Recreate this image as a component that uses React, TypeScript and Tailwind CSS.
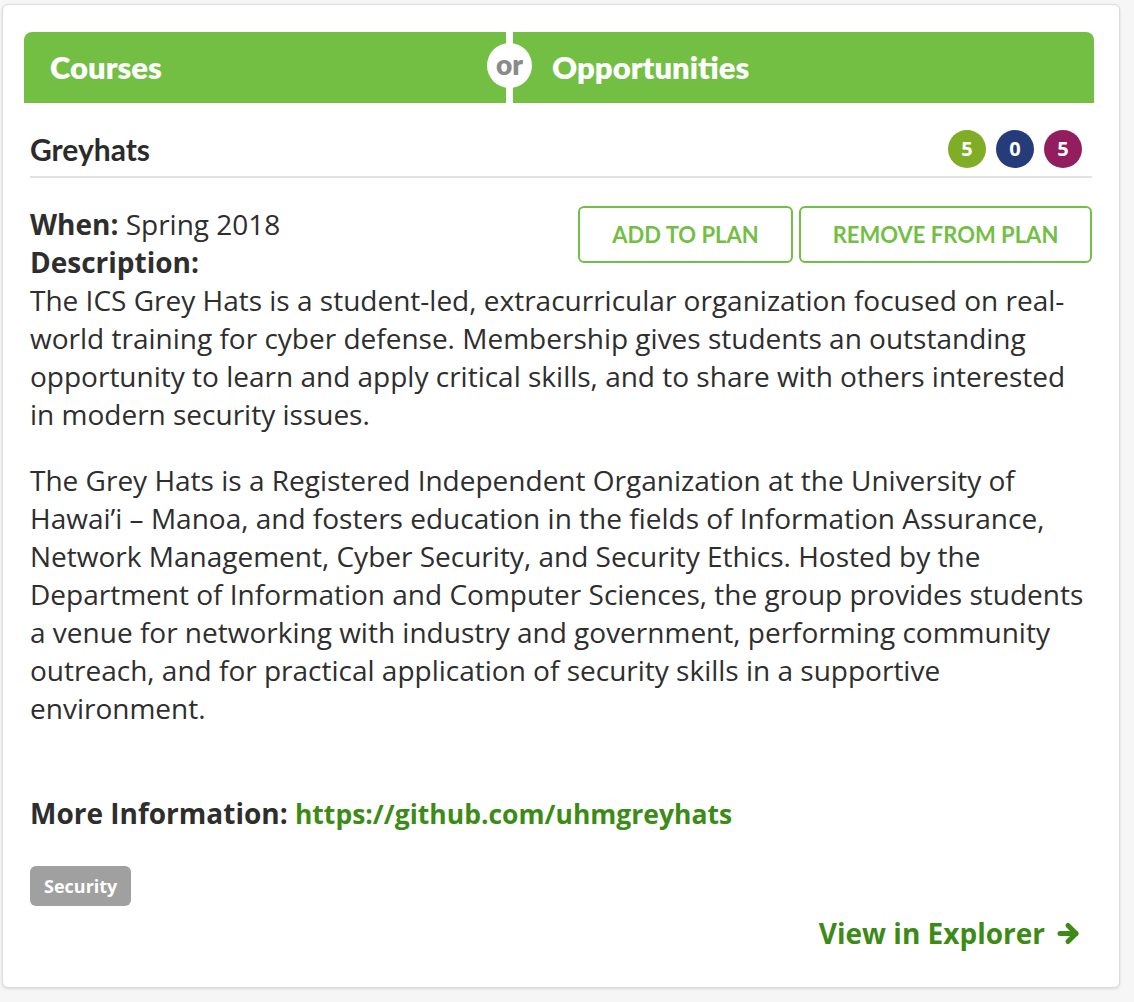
const body = { fontFamily: '"Open Sans", "Liberation Sans", sans-serif' };
const head = { fontFamily: 'Lato, "Open Sans", sans-serif' };

function CountBadge({ value, color }: { value: number; color: string }) {
  return (
    <span
      className={`flex h-[38px] w-[38px] items-center justify-center rounded-full text-[20px] font-bold text-white ${color}`}
      style={body}
    >
      {value}
    </span>
  );
}

export default function App() {
  return (
    <div className="min-h-[1002px] w-[1134px] bg-[#f6f6f6] pt-[4px] pl-[2px]" style={body}>
      <div className="w-[1118px] rounded-[6px] border border-[#dcdcdc] bg-white pt-[27px] pr-[25px] pb-[35px] pl-[21px] shadow-[0_1px_3px_rgba(0,0,0,0.12)]">
        {/* Courses / Opportunities toggle */}
        <div className="relative flex h-[71px] w-[1070px] gap-[7px]" style={head}>
          <div className="flex w-[482px] items-center rounded-tl-[8px] bg-[#72bf44] pl-[26px] text-[31px] font-extrabold text-white">
            Courses
          </div>
          <div className="flex flex-1 items-center rounded-tr-[8px] bg-[#72bf44] pl-[39px] text-[31px] font-extrabold text-white">
            Opportunities
          </div>
          <div className="absolute top-[11px] left-[463px] flex h-[45px] w-[45px] items-center justify-center rounded-full bg-white pb-[3px] text-[28px] font-extrabold text-[#8a8a8a]">
            or
          </div>
        </div>

        <div className="pr-[2px] pl-[6px]">
          {/* title row */}
          <div className="mt-[27px] flex items-center justify-between border-b-2 border-[#e2e2e2] pb-[8px]">
            <h2 className="text-[30px] font-bold leading-[34px] text-[#2b2b2b]" style={head}>
              Greyhats
            </h2>
            <div className="mr-[10px] flex gap-[10px]">
              <CountBadge value={5} color="bg-[#7fad25]" />
              <CountBadge value={0} color="bg-[#263b7a]" />
              <CountBadge value={5} color="bg-[#921e5f]" />
            </div>
          </div>

          <div className="pt-[28px] text-[28px] leading-[38px] text-[#2e2e2e]">
            <div className="float-right flex gap-[6px]" style={head}>
              <button className="h-[57px] w-[215px] rounded-[6px] border-2 border-[#72bf44] bg-white text-[22px] font-bold text-[#72bf44]">
                ADD TO PLAN
              </button>
              <button className="h-[57px] w-[293px] rounded-[6px] border-2 border-[#72bf44] bg-white text-[22px] font-bold text-[#72bf44]">
                REMOVE FROM PLAN
              </button>
            </div>
            <div className="-mt-[1px]">
              <span className="font-bold">When:</span> Spring 2018
            </div>
            <div className="font-bold">Description:</div>
            <p>
              The ICS Grey Hats is a student-led, extracurricular organization focused on real-world training for cyber
              defense. Membership gives students an outstanding opportunity to learn and apply critical skills, and to
              share with others interested in modern security issues.
            </p>
            <p className="mt-[28px]">
              The Grey Hats is a Registered Independent Organization at the University of Hawai’i – Manoa, and fosters
              education in the fields of Information Assurance, Network Management, Cyber Security, and Security Ethics.
              Hosted by the Department of Information and Computer Sciences, the group provides students a venue for
              networking with industry and government, performing community outreach, and for practical application of
              security skills in a supportive environment.
            </p>

            <div className="mt-[67px] font-bold">
              More Information:{' '}
              <a href="#" className="text-[26.5px] text-[#3d8b17]">
                https://github.com/uhmgreyhats
              </a>
            </div>

            <div className="mt-[33px] flex">
              <span className="flex h-[40px] items-center rounded-[6px] bg-[#a0a0a0] px-[14px] text-[18px] leading-none font-bold text-white">
                Security
              </span>
            </div>

            <div className="mt-[8px] flex justify-end pr-[12px]">
              <a href="#" className="flex items-center gap-[12px] text-[28px] font-bold text-[#3d8b17]">
                View in Explorer
                <svg width="23" height="25" viewBox="0 0 23 25" fill="none" stroke="currentColor" strokeWidth="5" strokeLinecap="round" strokeLinejoin="round">
                  <path d="M3 12.5h16" />
                  <path d="M11 4.5l8 8-8 8" />
                </svg>
              </a>
            </div>
          </div>
        </div>
      </div>
    </div>
  );
}
